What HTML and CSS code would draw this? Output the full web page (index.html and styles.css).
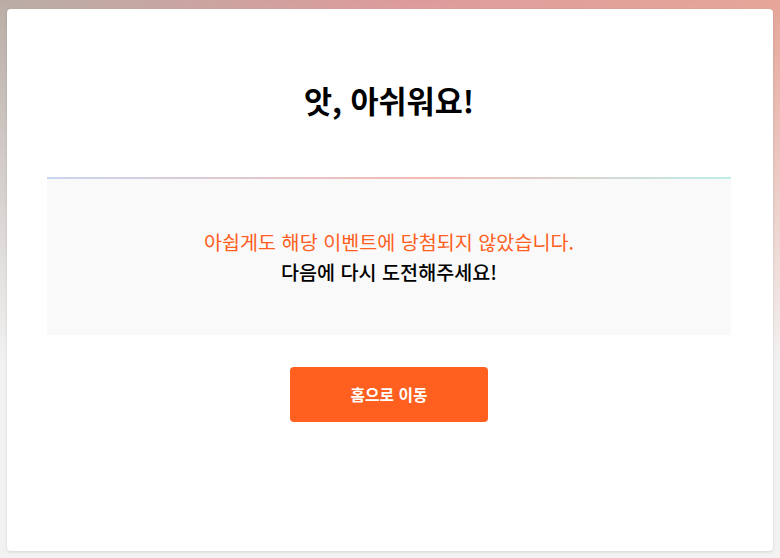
FILE: index.html
```html
<!DOCTYPE html>
<html lang="ko">
<head>
    <meta charset="UTF-8">
    <meta name="viewport" content="width=device-width, initial-scale=1.0">
    <title>이벤트 결과</title>
    <link rel="stylesheet" href="styles.css">
</head>
<body>
    <div class="card">
        <h1 class="title">앗, 아쉬워요!</h1>
        <div class="result">
            <p class="result-main">아쉽게도 해당 이벤트에 당첨되지 않았습니다.</p>
            <p class="result-sub">다음에 다시 도전해주세요!</p>
        </div>
        <div class="actions">
            <button type="button" class="home-btn">홈으로 이동</button>
        </div>
    </div>
</body>
</html>
```

FILE: styles.css
```css
/* page background */
html {
    height: 100%;
}
body {
    margin: 0;
    height: 100%;
    box-sizing: border-box;
    padding: 9px 7px 7px;
    font-family: "Noto Sans CJK KR", "Noto Sans", sans-serif;
    background: linear-gradient(to bottom, rgba(242, 242, 242, 0) 0%, #f2f2f2 65%),
                linear-gradient(to right, #b9ada6 0%, #dc9b9b 50%, #e6a598 100%);
    background-color: #f2f2f2;
}

/* card */
.card {
    height: 100%;
    box-sizing: border-box;
    background-color: #ffffff;
    border-radius: 4px;
    box-shadow: 0 1px 3px rgba(0, 0, 0, 0.12);
    padding: 69px 42px 0 40px;
}
.title {
    margin: 0;
    text-align: center;
    font-size: 30.5px;
    line-height: 45px;
    font-weight: 700;
    color: #000;
}

/* result box */
.result {
    margin-top: 54px;
    border-top: 2px solid transparent;
    border-image: linear-gradient(to right, #c9d6f0, #f4bab2 55%, #bdeeea) 1;
    background-color: #f9f9f9;
    padding: 48px 0;
    text-align: center;
}
.result p {
    margin: 0;
    font-size: 19.6px;
    line-height: 30px;
}
.result-main {
    color: #ff5e21;
}
.result-sub {
    color: #000;
    font-weight: 500;
}

/* button */
.actions {
    margin-top: 32px;
    display: flex;
    justify-content: center;
}
.home-btn {
    width: 198px;
    height: 55px;
    border: none;
    border-radius: 4px;
    background-color: #ff5f1f;
    color: #fff;
    font-family: inherit;
    font-size: 15.8px;
    font-weight: 700;
    cursor: pointer;
}
```
